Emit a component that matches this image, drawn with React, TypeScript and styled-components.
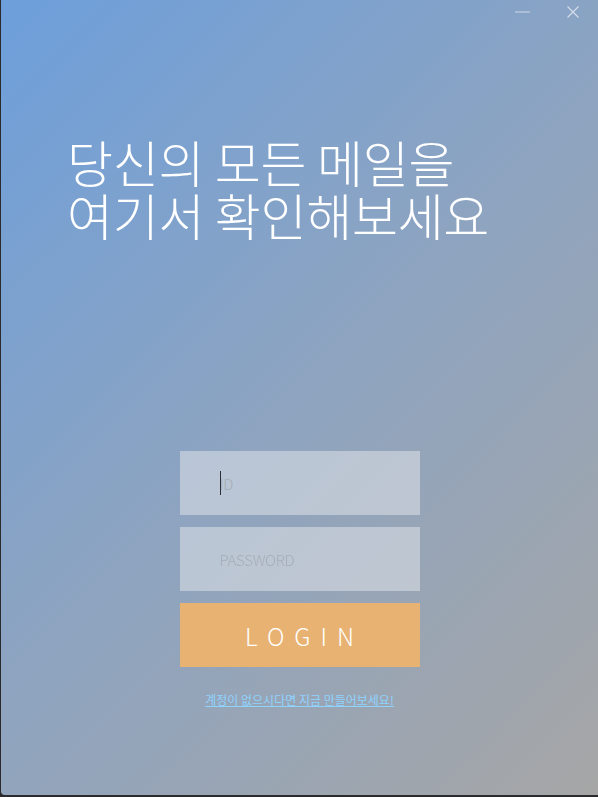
import React from "react";
import styled, { createGlobalStyle } from "styled-components";

const Global = createGlobalStyle`
  html, body { margin: 0; padding: 0; background: #2b2b2e; }
  * { box-sizing: border-box; }
  #root { width: 598px; height: 797px; }
`;

const Frame = styled.div`
  width: 598px;
  height: 797px;
  padding: 0 0 2px 1px;
  background: #2b2b2e;
`;

const Window = styled.div`
  width: 597px;
  height: 795px;
  border-bottom-left-radius: 4px;
  background: linear-gradient(135deg, #6d9fdb 0%, #8ea4c0 50%, #a6a6a6 100%);
  display: flex;
  flex-direction: column;
  font-family: "Noto Sans CJK KR", "Noto Sans", sans-serif;
`;

const TitleBar = styled.div`
  height: 30px;
  display: flex;
  justify-content: flex-end;
  align-items: center;
`;

const WinButton = styled.button`
  width: 50px;
  height: 24px;
  border: none;
  background: transparent;
  padding: 0;
  display: flex;
  align-items: center;
  justify-content: center;
  margin-top: -6px;
`;

const Title = styled.h1`
  margin: 105px 0 0 66px;
  font-size: 50px;
  line-height: 53px;
  font-weight: 300;
  color: #ffffff;
  letter-spacing: -0.3px;
`;

const TitleLine = styled.span`
  display: block;
`;

const Form = styled.form`
  margin: 210px auto 0;
  width: 240px;
  display: flex;
  flex-direction: column;
  gap: 12px;
  align-items: stretch;
`;

const FieldWrap = styled.div`
  position: relative;
  display: flex;
`;

const Caret = styled.span`
  position: absolute;
  left: 40px;
  top: 20px;
  width: 1px;
  height: 24px;
  background: #2a2f3a;
  pointer-events: none;
`;

const Field = styled.input`
  flex: 1;
  height: 64px;
  border: none;
  outline: none;
  padding: 0 0 0 40px;
  background: rgba(222, 226, 232, 0.55);
  font-family: "Noto Sans CJK KR", "Noto Sans", sans-serif;
  font-weight: 300;
  font-size: 15px;
  color: #333;
  caret-color: transparent;
  &::placeholder {
    color: #a6adb6;
    letter-spacing: -0.3px;
  }
`;

const LoginButton = styled.button`
  height: 64px;
  border: none;
  background: #e8b273;
  color: #ffffff;
  font-family: "Noto Sans CJK KR", "Noto Sans", sans-serif;
  font-weight: 300;
  font-size: 24px;
  letter-spacing: 10px;
  padding: 0 0 0 10px;
  cursor: pointer;
`;

const SignupLink = styled.a`
  margin-top: 12px;
  align-self: center;
  font-size: 12px;
  color: #8fd3ff;
  text-decoration: underline;
  font-family: "Noto Sans CJK KR", sans-serif;
`;

export default function App() {
  return (
    <>
      <Global />
      <Frame>
        <Window>
          <TitleBar>
            <WinButton aria-label="minimize">
              <svg width="16" height="10" viewBox="0 0 16 10">
                <line x1="0" y1="5" x2="15" y2="5" stroke="#c3d0e2" strokeWidth="1.2" />
              </svg>
            </WinButton>
            <WinButton aria-label="close">
              <svg width="14" height="14" viewBox="0 0 14 14">
                <path d="M1.5 1.5 L12.5 12.5 M12.5 1.5 L1.5 12.5" stroke="#d5deea" strokeWidth="1.1" fill="none" />
              </svg>
            </WinButton>
          </TitleBar>
          <Title>
            <TitleLine>당신의 모든 메일을</TitleLine>
            <TitleLine>여기서 확인해보세요</TitleLine>
          </Title>
          <Form onSubmit={(e) => e.preventDefault()}>
            <FieldWrap>
              <Field placeholder="ID" autoFocus />
              <Caret />
            </FieldWrap>
            <FieldWrap>
              <Field placeholder="PASSWORD" type="password" />
            </FieldWrap>
            <LoginButton type="submit">LOGIN</LoginButton>
            <SignupLink href="#">계정이 없으시다면 지금 만들어보세요!</SignupLink>
          </Form>
        </Window>
      </Frame>
    </>
  );
}
